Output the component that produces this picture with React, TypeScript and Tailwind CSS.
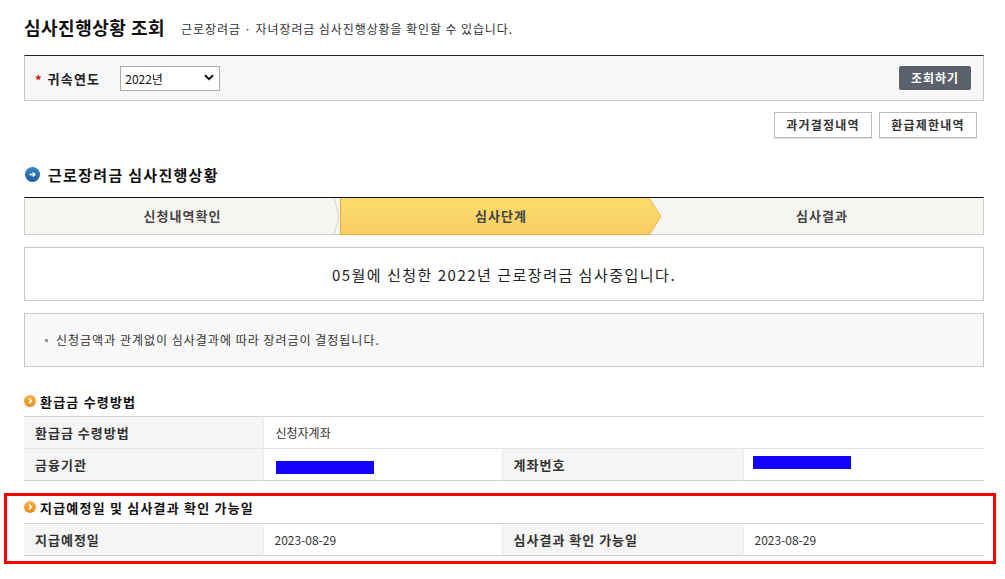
import React from 'react'

const font = { fontFamily: '"Noto Sans CJK KR", "Noto Sans", sans-serif' }

function BlueIcon() {
  return (
    <svg width="15" height="15" viewBox="0 0 15 15" className="shrink-0">
      <defs>
        <linearGradient id="bi" x1="0" y1="0" x2="0" y2="1">
          <stop offset="0" stopColor="#3a86c8" />
          <stop offset="1" stopColor="#1c5c9c" />
        </linearGradient>
      </defs>
      <circle cx="7.5" cy="7.5" r="7.5" fill="url(#bi)" />
      <path d="M4.5 7.5h5.2M7.8 5.4l2.1 2.1-2.1 2.1" stroke="#fff" strokeWidth="1.4" fill="none" />
    </svg>
  )
}

function OrangeIcon() {
  return (
    <svg width="12" height="12" viewBox="0 0 12 12" className="shrink-0">
      <defs>
        <linearGradient id="oi" x1="0" y1="0" x2="0" y2="1">
          <stop offset="0" stopColor="#f7b447" />
          <stop offset="1" stopColor="#e98c1e" />
        </linearGradient>
      </defs>
      <circle cx="6" cy="6" r="6" fill="url(#oi)" />
      <path d="M5 3.6l2.4 2.4L5 8.4" stroke="#fff" strokeWidth="1.5" fill="none" />
    </svg>
  )
}

function SubHeading({ children }: { children: React.ReactNode }) {
  return (
    <div className="flex items-center gap-[4px] h-[16px]">
      <OrangeIcon />
      <span className="text-[13px] font-bold text-[#111] leading-none tracking-[1.2px]">{children}</span>
    </div>
  )
}

function BlueBar() {
  return <div className="w-[98px] h-[13px] bg-[#1400ff]" />
}

const th = 'bg-[#f5f5f5] pl-[11px] text-[13px] font-bold text-[#333] tracking-[1px] border-r border-r-[#ebebeb]'

export default function App() {
  return (
    <div className="w-[1005px] h-[579px] bg-white overflow-hidden" style={font}>
      <div className="ml-[24px] w-[960px]">
        {/* title */}
        <div className="flex items-end h-[20px] mt-[16px]">
          <h1 className="text-[18px] font-bold text-[#111] leading-none tracking-[0.5px]">심사진행상황 조회</h1>
          <p className="ml-[16px] text-[12px] text-[#333] leading-none pb-[1px] tracking-[0.9px]">근로장려금 · 자녀장려금 심사진행상황을 확인할 수 있습니다.</p>
        </div>

        {/* search box */}
        <div className="mt-[19px] h-[46px] bg-[#f7f7f7] border border-[#c8c8c8] border-t-[#222] flex items-center pl-[10px] pr-[12px]">
          <span className="text-[#d01010] text-[13px] font-bold leading-none mt-[2px]">*</span>
          <span className="ml-[6px] text-[13px] font-bold text-[#222] leading-none tracking-[1.2px]">귀속연도</span>
          <div className="relative ml-[20px] w-[100px] h-[25px] -mt-[2px]">
            <select className="appearance-none w-full h-full bg-white border border-[#aaa] pl-[4px] text-[12px] text-[#111] outline-none" style={font} defaultValue="2022">
              <option value="2022">2022년</option>
              <option value="2021">2021년</option>
            </select>
            <svg width="10" height="7" viewBox="0 0 10 7" className="absolute right-[6px] top-[9px] pointer-events-none">
              <path d="M1 1.2l4 4 4-4" stroke="#111" strokeWidth="2" fill="none" />
            </svg>
          </div>
          <button className="ml-auto w-[72px] h-[24px] rounded-[2px] bg-[#5a616b] text-white text-[12px] font-bold leading-none tracking-[1px]">조회하기</button>
        </div>

        {/* buttons */}
        <div className="mt-[11px] flex justify-end gap-[7px] pr-[7px]">
          <button className="w-[98px] h-[26px] bg-white border border-[#bdbdbd] text-[12px] font-bold text-[#333] leading-none tracking-[1.2px] shadow-[0_1px_0_#ddd]">과거결정내역</button>
          <button className="w-[98px] h-[26px] bg-white border border-[#bdbdbd] text-[12px] font-bold text-[#333] leading-none tracking-[1.2px] shadow-[0_1px_0_#ddd]">환급제한내역</button>
        </div>

        {/* section heading */}
        <div className="mt-[28px] flex items-center gap-[8px] h-[16px] pl-[1px]">
          <BlueIcon />
          <span className="text-[15px] font-bold text-[#111] leading-none tracking-[1.3px]">근로장려금 심사진행상황</span>
        </div>

        {/* steps */}
        <div className="mt-[15px] h-[38px] flex border-t border-t-[#111] border-b border-b-[#cfcfcf] border-x border-x-[#cfcfcf] bg-[#f6f5f2]">
          <div className="relative w-[315px] flex items-center justify-center text-[13px] font-bold text-[#444] tracking-[1px]">
            신청내역확인
            <svg width="6" height="37" viewBox="0 0 6 37" className="absolute right-0 top-0">
              <path d="M0 0l5 18.5L0 37" stroke="#d4d2cc" strokeWidth="1" fill="none" />
            </svg>
          </div>
          <div className="relative z-10 w-[309px] flex items-center justify-center text-[13px] font-bold text-[#444] tracking-[1px] bg-gradient-to-b from-[#fedd6b] to-[#f8cd65] border-l border-[#e7ae3d] border-b border-b-[#e7ae3d] -mb-px">
            <span className="ml-[12px]">심사단계</span>
            <svg width="13" height="38" viewBox="0 0 13 38" className="absolute -right-[13px] top-0">
              <defs>
                <linearGradient id="yg" x1="0" y1="0" x2="0" y2="1">
                  <stop offset="0" stopColor="#fedd6b" />
                  <stop offset="1" stopColor="#f8cd65" />
                </linearGradient>
              </defs>
              <path d="M0 0L12 18.5L0 37.5Z" fill="url(#yg)" />
              <path d="M0 0L12 18.5L0 37.5" stroke="#ecb54a" strokeWidth="1" fill="none" />
            </svg>
          </div>
          <div className="flex-1 flex items-center justify-center text-[13px] font-bold text-[#444] tracking-[1px] pl-[12px]">심사결과</div>
        </div>

        {/* message */}
        <div className="mt-[12px] h-[54px] border border-[#c8c8c8] flex items-center justify-center text-[15px] text-[#222] leading-none tracking-[1.5px]">
          05월에 신청한 2022년 근로장려금 심사중입니다.
        </div>

        {/* note */}
        <div className="mt-[12px] h-[54px] border border-[#c8c8c8] bg-[#f8f8f8] flex items-center pl-[20px]">
          <span className="w-[3px] h-[3px] bg-[#999] mr-[8px]" />
          <span className="text-[12px] text-[#333] leading-none tracking-[1px]">신청금액과 관계없이 심사결과에 따라 장려금이 결정됩니다.</span>
        </div>

        {/* refund method */}
        <div className="mt-[26px]">
          <SubHeading>환급금 수령방법</SubHeading>
        </div>
        <table className="mt-[7px] w-full border-collapse border-t border-t-[#d2d2d2] text-left">
          <tbody>
            <tr className="h-[32px] border-b border-b-[#e4e4e4]">
              <th className={`w-[239px] ${th}`}>환급금 수령방법</th>
              <td colSpan={3} className="pl-[12px] text-[12px] text-[#333]">신청자계좌</td>
            </tr>
            <tr className="h-[32px] border-b border-b-[#d0d0d0]">
              <th className={`w-[239px] ${th}`}>금융기관</th>
              <td className="w-[239px] pl-[12px] border-r border-r-[#ebebeb]">
                <div className="mt-[6px]"><BlueBar /></div>
              </td>
              <th className={`w-[241px] ${th}`}>계좌번호</th>
              <td className="pl-[9px]">
                <div className="mb-[4px]"><BlueBar /></div>
              </td>
            </tr>
          </tbody>
        </table>
      </div>

      {/* highlighted box */}
      <div className="mt-[12px] ml-[4px] w-[992px] border-[3px] border-[#ff0000] pl-[17px] pr-[9px] pt-[3px] pb-[5px]">
        <SubHeading>지급예정일 및 심사결과 확인 가능일</SubHeading>
        <table className="mt-[8px] w-full border-collapse border-t border-t-[#d2d2d2] text-left">
          <tbody>
            <tr className="h-[32px] border-b border-b-[#d0d0d0]">
              <th className={`w-[239px] ${th}`}>지급예정일</th>
              <td className="w-[239px] pl-[11px] text-[12px] text-[#333] border-r border-r-[#ebebeb]">2023-08-29</td>
              <th className={`w-[241px] ${th}`}>심사결과 확인 가능일</th>
              <td className="pl-[11px] text-[12px] text-[#333]">2023-08-29</td>
            </tr>
          </tbody>
        </table>
      </div>
    </div>
  )
}
